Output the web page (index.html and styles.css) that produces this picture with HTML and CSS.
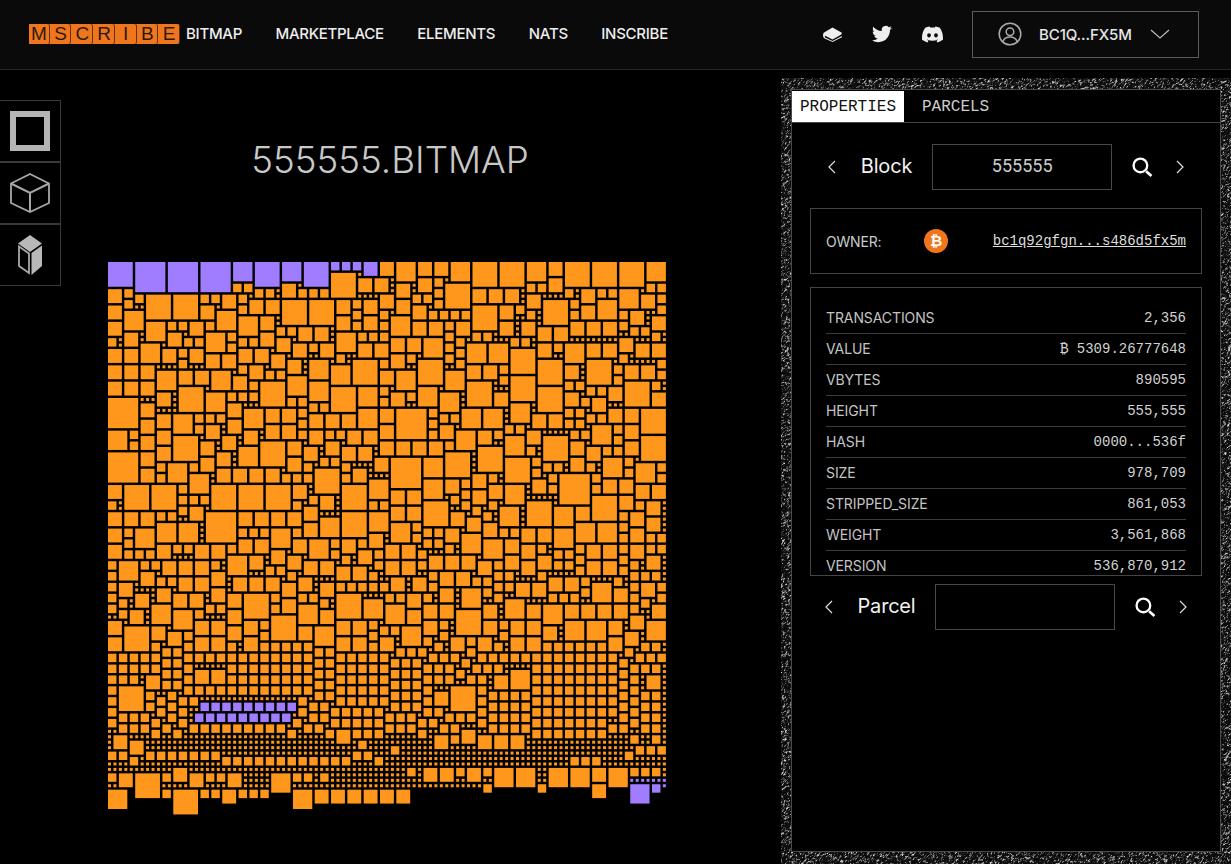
FILE: index.html
```html
<!DOCTYPE html>
<html lang="en">
<head>
<meta charset="utf-8">
<title>555555.BITMAP</title>
<link rel="stylesheet" href="styles.css">
</head>
<body>
<header class="topbar">
  <div class="brand">
    <div class="logo"><span>M</span><span>S</span><span>C</span><span>R</span><span>I</span><span>B</span><span>E</span></div>
    <nav class="nav"><a>BITMAP</a><a>MARKETPLACE</a><a>ELEMENTS</a><a>NATS</a><a>INSCRIBE</a></nav>
  </div>
  <div class="actions">
    <div class="socials">
      <svg class="ic-book" viewBox="0 0 22 16"><path d="M11 0.5 21 6 20.4 8 11 13.2 3.2 9.2C2.6 10 2.8 11 3.6 11.4L11 15 21 9.6V11L11 16 2.6 12.2C0.6 11 0.4 8 1.6 6Z" fill="#eee"/></svg>
      <svg class="ic-tw" viewBox="0 0 24 24"><path fill="#eee" d="M23.953 4.57a10 10 0 01-2.825.775 4.958 4.958 0 002.163-2.723c-.951.555-2.005.959-3.127 1.184a4.92 4.92 0 00-8.384 4.482C7.69 8.095 4.067 6.13 1.64 3.162a4.822 4.822 0 00-.666 2.475c0 1.71.87 3.213 2.188 4.096a4.904 4.904 0 01-2.228-.616v.06a4.923 4.923 0 003.946 4.827 4.996 4.996 0 01-2.212.085 4.936 4.936 0 004.604 3.417 9.867 9.867 0 01-6.102 2.105c-.39 0-.779-.023-1.17-.067a13.995 13.995 0 007.557 2.209c9.053 0 13.998-7.496 13.998-13.985 0-.21 0-.42-.015-.63A9.935 9.935 0 0024 4.59z"/></svg>
      <svg class="ic-dc" viewBox="0 0 24 24"><path fill="#eee" d="M20.317 4.3698a19.7913 19.7913 0 00-4.8851-1.5152.0741.0741 0 00-.0785.0371c-.211.3753-.4447.8648-.6083 1.2495-1.8447-.2762-3.68-.2762-5.4868 0-.1636-.3933-.4058-.8742-.6177-1.2495a.077.077 0 00-.0785-.037 19.7363 19.7363 0 00-4.8852 1.515.0699.0699 0 00-.0321.0277C.5334 9.0458-.319 13.5799.0992 18.0578a.0824.0824 0 00.0312.0561c2.0528 1.5076 4.0413 2.4228 5.9929 3.0294a.0777.0777 0 00.0842-.0276c.4616-.6304.8731-1.2952 1.226-1.9942a.076.076 0 00-.0416-.1057c-.6528-.2476-1.2743-.5495-1.8722-.8923a.077.077 0 01-.0076-.1277c.1258-.0943.2517-.1923.3718-.2914a.0743.0743 0 01.0776-.0105c3.9278 1.7933 8.18 1.7933 12.0614 0a.0739.0739 0 01.0785.0095c.1202.099.246.1981.3728.2924a.077.077 0 01-.0066.1276 12.2986 12.2986 0 01-1.873.8914.0766.0766 0 00-.0407.1067c.3604.698.7719 1.3628 1.225 1.9932a.076.076 0 00.0842.0286c1.961-.6067 3.9495-1.5219 6.0023-3.0294a.077.077 0 00.0313-.0552c.5004-5.177-.8382-9.6739-3.5485-13.6604a.061.061 0 00-.0312-.0286zM8.02 15.3312c-1.1825 0-2.1569-1.0857-2.1569-2.419 0-1.3332.9555-2.4189 2.157-2.4189 1.2108 0 2.1757 1.0952 2.1568 2.419 0 1.3332-.9555 2.4189-2.1569 2.4189zm7.9748 0c-1.1825 0-2.1569-1.0857-2.1569-2.419 0-1.3332.9554-2.4189 2.1569-2.4189 1.2108 0 2.1757 1.0952 2.1568 2.419 0 1.3332-.946 2.4189-2.1568 2.4189Z"/></svg>
    </div>
    <div class="wallet">
      <svg class="avatar" viewBox="0 0 24 24" fill="none" stroke="#aaa" stroke-width="1.500"><circle cx="12" cy="12" r="10.800"/><circle cx="12" cy="9.800" r="3.800"/><path d="M4.800 19.600c1.400-3.400 4-4.600 7.200-4.600s5.800 1.200 7.200 4.600"/></svg>
      <span class="wallet-addr">BC1Q...FX5M</span>
      <svg class="wallet-chev" viewBox="0 0 20 10" fill="none" stroke="#bbb" stroke-width="1.200"><path d="M1 1l9 8 9-8"/></svg>
    </div>
  </div>
</header>
<main class="layout">
  <aside class="tools">
    <div class="tool">
      <svg viewBox="0 0 40 40"><rect x="3" y="3" width="34" height="34" fill="none" stroke="#b4b4b4" stroke-width="6"/></svg>
    </div>
    <div class="tool">
      <svg viewBox="0 0 40 40" fill="none" stroke="#a8a8a8" stroke-width="1.800"><path d="M20 1 39 10.500V30L20 39 1 30V10.500Z"/><path d="M1 10.500 20 20 39 10.500M20 20V39" stroke-width="2"/></svg>
    </div>
    <div class="tool">
      <svg viewBox="0 0 40 40"><path d="M20 0 32 8.500 20 17 8 8.500Z" fill="#b8b8b8"/><path d="M21.500 18 32 10.500V31L21.500 40Z" fill="#b8b8b8"/><path d="M9 11.500 19 18.500V38L9 31Z" fill="none" stroke="#a8a8a8" stroke-width="1.800"/></svg>
    </div>
  </aside>
  <section class="stage">
    <h1 class="title">555555.BITMAP</h1>
    <canvas id="bitmap" class="bitmap" width="558" height="553"></canvas>
  </section>
  <aside class="panel">
    <canvas id="noise" class="noise" width="450" height="786"></canvas>
    <div class="panel-inner">
      <div class="tabs"><button class="tab tab-on">PROPERTIES</button><button class="tab">PARCELS</button></div>
      <div class="seek seek-block">
        <svg class="chev" viewBox="0 0 10 16" fill="none" stroke="#ddd" stroke-width="1.200"><path d="M8 2 2 8l6 6"/></svg>
        <span class="seek-label">Block</span>
        <div class="seek-input">555555</div>
        <svg class="lens" viewBox="0 0 20 20" fill="none" stroke="#fff"><circle cx="8" cy="8" r="6.500" stroke-width="2.200"/><path d="M13.500 13.500l5 4.500" stroke-width="2.600"/></svg>
        <svg class="chev" viewBox="0 0 10 16" fill="none" stroke="#ddd" stroke-width="1.200"><path d="M2 2l6 6-6 6"/></svg>
      </div>
      <div class="owner">
        <span class="owner-label">OWNER:</span>
        <svg class="btc" viewBox="0 0 24 24"><circle cx="12" cy="12" r="12" fill="#f0761e"/><text x="12" y="17" text-anchor="middle" class="btc-glyph">₿</text></svg>
        <a class="owner-addr">bc1q92gfgn...s486d5fx5m</a>
      </div>
      <div class="props">
        <div class="prop"><span class="k">TRANSACTIONS</span><span class="v">2,356</span></div>
        <div class="prop"><span class="k">VALUE</span><span class="v">₿ 5309.26777648</span></div>
        <div class="prop"><span class="k">VBYTES</span><span class="v">890595</span></div>
        <div class="prop"><span class="k">HEIGHT</span><span class="v">555,555</span></div>
        <div class="prop"><span class="k">HASH</span><span class="v">0000...536f</span></div>
        <div class="prop"><span class="k">SIZE</span><span class="v">978,709</span></div>
        <div class="prop"><span class="k">STRIPPED_SIZE</span><span class="v">861,053</span></div>
        <div class="prop"><span class="k">WEIGHT</span><span class="v">3,561,868</span></div>
        <div class="prop"><span class="k">VERSION</span><span class="v">536,870,912</span></div>
      </div>
      <div class="seek seek-parcel">
        <svg class="chev" viewBox="0 0 10 16" fill="none" stroke="#ddd" stroke-width="1.200"><path d="M8 2 2 8l6 6"/></svg>
        <span class="seek-label">Parcel</span>
        <div class="seek-input"></div>
        <svg class="lens" viewBox="0 0 20 20" fill="none" stroke="#fff"><circle cx="8" cy="8" r="6.500" stroke-width="2.200"/><path d="M13.500 13.500l5 4.500" stroke-width="2.600"/></svg>
        <svg class="chev" viewBox="0 0 10 16" fill="none" stroke="#ddd" stroke-width="1.200"><path d="M2 2l6 6-6 6"/></svg>
      </div>
    </div>
  </aside>
</main>
<script src="script.js"></script>
</body>
</html>
```
FILE: styles.css
```css
* { box-sizing: border-box; }
html, body { margin: 0; height: 100%; }
body {
  background: #000;
  color: #ddd;
  font-family: "Inter", "Liberation Sans", sans-serif;
  overflow: hidden;
}
.topbar {
  height: 70px;
  background: #0a0a0a;
  border-bottom: 1px solid #262626;
  display: flex;
  justify-content: space-between;
  align-items: center;
  padding: 0 32px 0 29px;
}
.brand { display: flex; align-items: center; gap: 7px; margin-top: -2px; }
.logo {
  display: flex;
  gap: 2px;
  width: 150px;
  height: 20px;
  background: #f0761e;
}
.logo span {
  flex: 1;
  height: 20px;
  background: #f0761e;
  border-radius: 2px;
  box-shadow: 1px 0 0 #5a3315;
  color: #2e1a08;
  font: 19px/20px "Liberation Sans", sans-serif;
  text-align: center;
}
.nav { display: flex; gap: 33.500px; }
.nav a { color: #eee; font-size: 15px; font-weight: 500; line-height: 20px; white-space: nowrap; letter-spacing: -0.28px; }
.actions { display: flex; align-items: center; gap: 29px; margin-top: -1px; }
.socials { display: flex; align-items: center; gap: 29px; }
.ic-book { width: 21px; height: 15px; }
.ic-tw { width: 20px; height: 20px; }
.ic-dc { width: 21px; height: 21px; margin-left: 1px; }
.wallet {
  width: 227px;
  height: 47px;
  border: 1px solid #5c5c5c;
  display: flex;
  align-items: center;
  padding-left: 25px;
}
.avatar { width: 24px; height: 24px; flex: none; }
.wallet-addr { margin-left: 17px; color: #e6e6e6; font-size: 15px; font-weight: 500; width: 94px; white-space: nowrap; letter-spacing: -0.1px; }
.wallet-chev { width: 20px; height: 10px; margin-left: 17px; }
.layout { display: flex; height: 794px; }
.tools { width: 61px; flex: none; padding-top: 30px; }
.tool {
  width: 61px;
  height: 62px;
  border: 1px solid #3a3a3a;
  border-left: 0;
  display: flex;
  align-items: center;
  justify-content: center;
}
.tool svg { width: 40px; height: 40px; }
.stage { width: 720px; flex: none; padding-left: 47px; }
.title {
  width: 564px;
  height: 192px;
  margin: 0;
  padding-top: 67px;
  text-align: center;
  font-size: 36.700px;
  line-height: 46px;
  font-weight: 300;
  color: #c8c8c8;
  white-space: nowrap;
}
.bitmap { display: block; width: 558px; height: 553px; }
.panel {
  position: relative;
  width: 450px;
  flex: none;
  margin-top: 8px;
  height: 786px;
  padding: 11px 10px 12px;
}
.noise { position: absolute; left: 0; top: 0; width: 450px; height: 786px; }
.panel-inner {
  position: relative;
  height: 100%;
  background: #000;
  border: 1px solid #4a4a4a;
}
.tabs {
  display: flex;
  height: 33px;
  padding-top: 1px;
  border-bottom: 1px solid #444;
}
.tab {
  appearance: none;
  background: transparent;
  border: 0;
  padding: 0;
  color: #ccc;
  font: 16px/30px "Liberation Mono", monospace;
  height: 31px;
  width: 85px;
  margin-left: 18px;
  white-space: nowrap;
  text-align: left;
}
.tab-on { background: #fff; color: #111; width: 112px; margin-left: 0; text-align: center; }
.seek { display: flex; align-items: center; justify-content: center; height: 46px; }
.seek-block { margin-top: 21px; }
.seek-parcel { margin-top: 8px; }
.chev { width: 10px; height: 16px; flex: none; }
.seek-label { margin: -2px 20px 0 24px; color: #f2f2f2; font-size: 20px; font-weight: 400; letter-spacing: -0.2px; white-space: nowrap; }
.seek-input {
  width: 180px;
  height: 46px;
  border: 1px solid #484848;
  color: #ccc;
  text-align: center;
  font: 18px/42px "Roboto", sans-serif;
}
.lens { width: 21px; height: 21px; margin: 0 22px 0 20px; flex: none; }
.owner {
  height: 66px;
  margin: 18px 18px 13px;
  border: 1px solid #444;
  display: flex;
  align-items: center;
  padding: 0 15px;
}
.owner-label { width: 98px; flex: none; font-size: 14px; color: #ccc; letter-spacing: -0.2px; }
.btc { width: 24px; height: 24px; flex: none; }
.btc-glyph { fill: #fff; font: bold 15px "DejaVu Sans", sans-serif; }
.owner-addr {
  margin-left: auto;
  color: #ddd;
  font: 14px "Liberation Mono", monospace;
  text-decoration: underline;
  white-space: nowrap;
}
.props {
  height: 289px;
  margin: 0 18px;
  border: 1px solid #444;
  padding: 15px 15px 0;
  overflow: hidden;
}
.prop {
  display: flex;
  justify-content: space-between;
  align-items: center;
  height: 31px;
  border-bottom: 1px solid #3c3c3c;
}
.k { color: #c4c4c4; font-size: 14px; white-space: nowrap; letter-spacing: -0.1px; margin-top: -2px; }
.v { color: #d2d2d2; font: 14px "Liberation Mono", monospace; white-space: nowrap; }
```
FILE: script.js
```js
(function () {
  var P = 5.44, COLS = 103, ROWS = 104, OX = 108, OY = 262;
  var ORANGE = '#ff971d', PURPLE = '#a07cff';

  var grid = [];
  for (var r = 0; r < ROWS; r++) { grid.push(new Array(COLS).fill(0)); }
  var squares = [];

  function free(c, r, n) {
    if (c < 0 || r < 0 || c + n > COLS || r + n > ROWS) return false;
    for (var y = r; y < r + n; y++) for (var x = c; x < c + n; x++) if (grid[y][x]) return false;
    return true;
  }
  function put(c, r, n, col) {
    for (var y = r; y < r + n; y++) for (var x = c; x < c + n; x++) grid[y][x] = 1;
    squares.push([c, r, n, col]);
  }
  // zoom-frame lists: [x, y, width] measured at 3x from an origin in page px
  function add(ox, oy, list, col) {
    list.forEach(function (s) {
      var c = Math.round((ox + s[0] / 3 - OX) / P);
      var r = Math.round((oy + s[1] / 3 - OY) / P);
      var n = Math.max(1, Math.round((s[2] + 7.5) / 16.32));
      if (free(c, r, n)) put(c, r, n, col || ORANGE);
    });
  }

  // purple cells
  add(100, 255, [[24,21,75],[106,21,90],[204,21,90],[303,21,90],[399,21,57],[465,21,75],[548,21,57],[612,21,75],[695,21,24],[727,21,24],[759,21,24],[792,21,42]], PURPLE);
  add(100, 690, [[303,40,24],[336,40,24],[369,40,24],[399,40,24],[432,40,24],[465,40,24],[498,40,24],[531,40,24],[564,40,24],
    [285,72,24],[318,72,24],[351,72,24],[384,72,24],[417,72,24],[450,72,24],[483,72,24],[516,72,24],[549,72,24]], PURPLE);
  add(400, 690, [[693,285,57],[759,285,24],[693,270,9],[710,270,9],[726,270,9],[743,270,9],[759,270,9],[776,270,9],[792,270,9],[792,286,9]], PURPLE);

  // bottom and dot-band region
  add(100, 690, [[57,-9,75],[138,9,24],[171,24,24],[42,138,39],[90,154,42],[710,122,39],[777,154,24],[873,171,24],
    [24,187,24],[57,187,24],[90,204,24],[138,187,24],[171,187,24],[204,187,24],[237,187,24],[270,187,24],[303,187,24],[336,187,24],
    [366,204,24],[399,204,24],[432,204,24],[465,204,24],[498,204,24],[531,204,24],[564,204,24],[597,204,24],[630,204,24],[663,204,24],[696,204,24],[729,204,24],
    [759,187,24],[792,187,24],[825,204,24],[924,237,24],[24,252,24],[57,252,42],[105,252,75],[189,252,24],[220,237,39],[270,252,42],[318,252,24],[351,252,24],[384,252,42],[513,252,57],[580,252,24],[613,252,24],[663,252,24],
    [24,303,57],[189,303,24],[220,303,75],[303,303,24],[336,303,24],[366,303,42],[417,303,24],[450,303,24],[483,303,24],[579,303,57],[645,303,42],[695,303,42],[743,303,42],[792,303,42],[840,303,42],[891,303,42]]);
  add(400, 690, [[105,0,42],[153,-9,75],[105,138,42],[153,138,24],[186,122,42],[234,138,42],[285,138,42],[333,138,42],[675,187,24],[708,171,24],[741,171,24],[774,171,24],[693,138,24],[759,138,24],[627,105,24],[660,105,24],[513,204,24],[546,204,24],[579,204,24],
    [24,237,24],[72,237,42],[120,237,42],[171,237,24],[201,237,42],[252,237,24],[285,237,57],[350,237,57],[447,237,57],[513,237,57],[579,237,42],[627,237,57],[693,237,24],[726,237,24],[759,237,24],
    [252,285,24],[417,285,24],[579,285,42]]);

  // upper left
  add(100, 255, [[694,54,75],[138,120,75],[220,120,75],[548,135,75],[628,135,75],[75,168,57],[352,168,57],[138,201,57],[417,186,57],[318,234,57],[711,234,57],[120,267,60],[170,348,57],[335,348,57],[564,366,57],[235,399,75],[480,381,75],[628,381,57],[694,399,75],[627,315,57],[759,315,75],[695,333,57],[24,432,90],[318,414,57],[432,462,57],[24,528,57],[220,480,57],[220,546,75],[480,561,75],[24,594,90],[417,579,57],[777,462,57],[204,627,57],[645,642,75],
    [24,105,42],[24,153,42],[24,201,42],[24,282,42],[75,282,42],[24,333,42],[75,333,42],[24,381,42],[75,381,42],[120,333,42],[75,234,42],[204,234,42],[270,201,42],[189,282,42],[270,282,42],[417,282,42],[465,282,42],[480,234,42],[531,252,42],[580,267,42],[595,219,42],[710,135,42],[710,186,42],[792,135,42],[792,186,42],[449,135,42],[498,135,42],[480,186,42],[366,120,42],[303,153,42],[237,348,42],[285,348,42],[399,366,42],[548,87,42],[122,447,42],[122,495,42],[122,546,42],[122,594,42],[171,480,42],[171,528,42],[171,579,42],[384,447,42],[384,495,42],[432,528,42],[498,462,42],[548,462,42],[498,513,42],[548,513,42],[303,561,42],[351,594,42],[303,609,42],[564,561,42],[564,609,42],[612,579,42],[628,480,42],[678,480,42],[727,480,42],[628,528,42],[741,528,42],[792,528,42],[678,561,42],[727,579,42],[777,399,57],[777,267,42],[825,267,42],[318,513,42]]);
  // upper right
  add(385, 255, [[36,21,57],[100,21,42],[150,21,42],[198,21,60],[264,21,75],[346,21,75],[429,21,57],[492,21,42],[543,21,75],[623,21,75],[705,21,75],[786,21,57],[36,87,42],[100,72,42],[183,87,75],[264,105,42],[313,105,42],[429,120,42],[591,105,42],[705,105,57],[771,120,42],[36,135,42],[84,153,42],[264,153,75],[477,135,75],[591,153,42],[639,135,57],[18,186,57],[84,201,42],[132,201,42],[216,201,42],[411,201,42],[804,186,39],[18,252,42],[69,252,39],[117,252,57],[462,219,39],[247,267,57],[313,267,57],[378,282,75],[462,267,39],[543,267,57],[607,267,42],[657,267,39],[705,252,42],[753,267,42],[18,300,42],[100,315,75],[462,315,75],[607,315,75],[543,333,39],[36,348,57],[183,348,57],[297,333,39],[378,366,75],[721,333,42],[771,333,39],[247,381,75],[462,399,72],[721,381,75],[18,414,42],[100,399,57],[165,414,57],[330,414,42],[543,414,39],[804,414,39],[624,432,39],[36,462,90],[231,462,57],[297,462,57],[378,447,57],[444,480,39],[672,462,42],[721,462,42],[771,462,72],[165,513,39],[215,528,57],[279,528,42],[429,528,39],[623,513,57],[721,513,39],[36,561,39],[84,561,42],[133,561,42],[362,546,57],[477,546,72],[558,561,42],[721,561,42],[771,546,72],[18,609,90],[117,609,57],[183,594,75],[279,579,75],[362,609,75],[607,579,39],[477,627,33],[558,609,39],[657,609,57],[753,627,57]]);
  // middle left
  add(100, 470, [[24,0,90],[122,0,42],[204,0,57],[352,0,39],[399,0,42],[450,0,42],[498,0,42],[645,0,75],[759,0,42],[270,15,57],[809,30,57],[24,48,42],[75,48,72],[156,48,72],[335,48,75],[417,48,75],[498,48,72],[580,48,42],[727,48,75],[270,111,42],[612,111,42],[24,129,42],[75,129,39],[122,129,42],[318,129,90],[417,129,39],[465,129,42],[513,129,42],[564,129,42],[663,144,57],[727,129,75],[809,129,57],[171,162,57],[237,162,57],[612,162,42],[24,177,42],[107,177,57],[513,177,57],[417,210,39],[465,210,42],[580,210,42],[628,210,57],[809,195,42],[24,228,42],[171,228,42],[285,228,42],[336,228,42],[513,243,42],[564,258,42],[57,276,57],[189,276,39],[237,276,42],[285,276,42],[384,258,57],[399,324,42],[450,324,42],[498,324,42],[57,342,42],[171,357,42],[548,342,39],[663,342,39],[840,342,30],[107,375,39],[384,375,39],[432,375,75],[548,390,39],[710,375,72],[792,390,57],[156,405,57],[220,423,57],[597,405,57],[663,423,39],[384,423,39],[90,423,42],[24,456,42],[285,456,42],[335,456,42],[432,456,42],[513,438,75],[597,471,42],[645,471,57],[710,456,42],[759,456,42],[840,471,30],[75,471,72],[156,471,42],[57,618,75],[138,618,42],[285,603,39],[335,603,39]]);
  // middle right
  add(385, 470, [[18,0,90],[183,0,75],[361,0,75],[657,0,57],[753,0,57],[525,15,90],[117,30,57],[183,30,39],[264,15,39],[444,30,42],[657,30,42],[705,30,42],[18,63,42],[69,63,39],[264,63,42],[313,48,42],[361,48,57],[753,48,42],[804,48,39],[117,96,72],[429,96,72],[623,81,72],[18,111,42],[69,111,39],[346,111,57],[510,111,57],[198,129,42],[738,129,42],[247,144,42],[18,162,57],[297,162,39],[575,162,57],[639,162,57],[183,177,39],[411,177,42],[459,177,42],[510,177,57],[738,177,42],[232,195,57],[297,210,57],[361,210,42],[411,228,42],[3,228,39],[51,228,42],[607,228,39],[657,228,39],[738,228,39],[132,258,42],[183,258,39],[459,258,42],[786,258,42],[84,324,42],[492,324,42],[543,324,39],[393,342,42],[624,342,57],[771,342,39],[690,357,39],[232,357,57],[69,375,39],[3,405,57],[117,405,42],[165,405,42],[297,405,39],[361,390,57],[429,405,39],[477,405,57],[543,405,39],[591,405,42],[639,405,42],[690,405,39],[804,405,39],[69,423,39],[215,423,75],[738,438,42],[0,471,42],[51,471,57],[297,456,39],[378,456,42],[429,456,39],[477,471,42],[543,456,57],[607,456,57],[786,456,57],[378,603,57],[330,618,42],[198,636,75],[786,618,42]]);

  // fill what is left with small squares, by band
  var seed = 4242;
  function rnd() { seed = (seed * 1664525 + 1013904223) >>> 0; return seed / 4294967296; }
  function maxSize(c, r) {
    if (r >= 97) return 0;
    if (r === 96 && c > 68) return 0;
    if (r >= 87) return 1;
    if (r >= 70) return 2;
    return 3;
  }
  for (var ry = 0; ry < ROWS; ry++) {
    for (var cx = 0; cx < COLS; cx++) {
      if (grid[ry][cx]) continue;
      var m = maxSize(cx, ry);
      if (!m) continue;
      var n = m;
      if (m === 3 && rnd() < 0.3) n = 2;
      while (n > 1 && !free(cx, ry, n)) n--;
      put(cx, ry, n, ORANGE);
    }
  }

  var ctx = document.getElementById('bitmap').getContext('2d');
  squares.forEach(function (s) {
    var size = s[2] * P - 2.44;
    ctx.fillStyle = s[3];
    ctx.fillRect(s[0] * P, s[1] * P, size, size);
  });

  // grainy frame of the side panel
  var nc = document.getElementById('noise');
  var nx = nc.getContext('2d');
  var img = nx.createImageData(nc.width, nc.height);
  var w = nc.width, h = nc.height, cell = [];
  for (var i = 0; i < w * h; i++) { cell.push(rnd()); }
  for (var y = 0; y < h; y++) {
    for (var x = 0; x < w; x++) {
      var a = cell[y * w + x], b = cell[y * w + (x + 1) % w], d = cell[((y + 1) % h) * w + x];
      var t = (a + b + d) / 3;
      var v = t > 0.52 ? Math.min(215, (t - 0.52) * 480 + 15) : t * 40;
      var k = (y * w + x) * 4;
      img.data[k] = img.data[k + 1] = img.data[k + 2] = v;
      img.data[k + 3] = 255;
    }
  }
  nx.putImageData(img, 0, 0);
})();
```
